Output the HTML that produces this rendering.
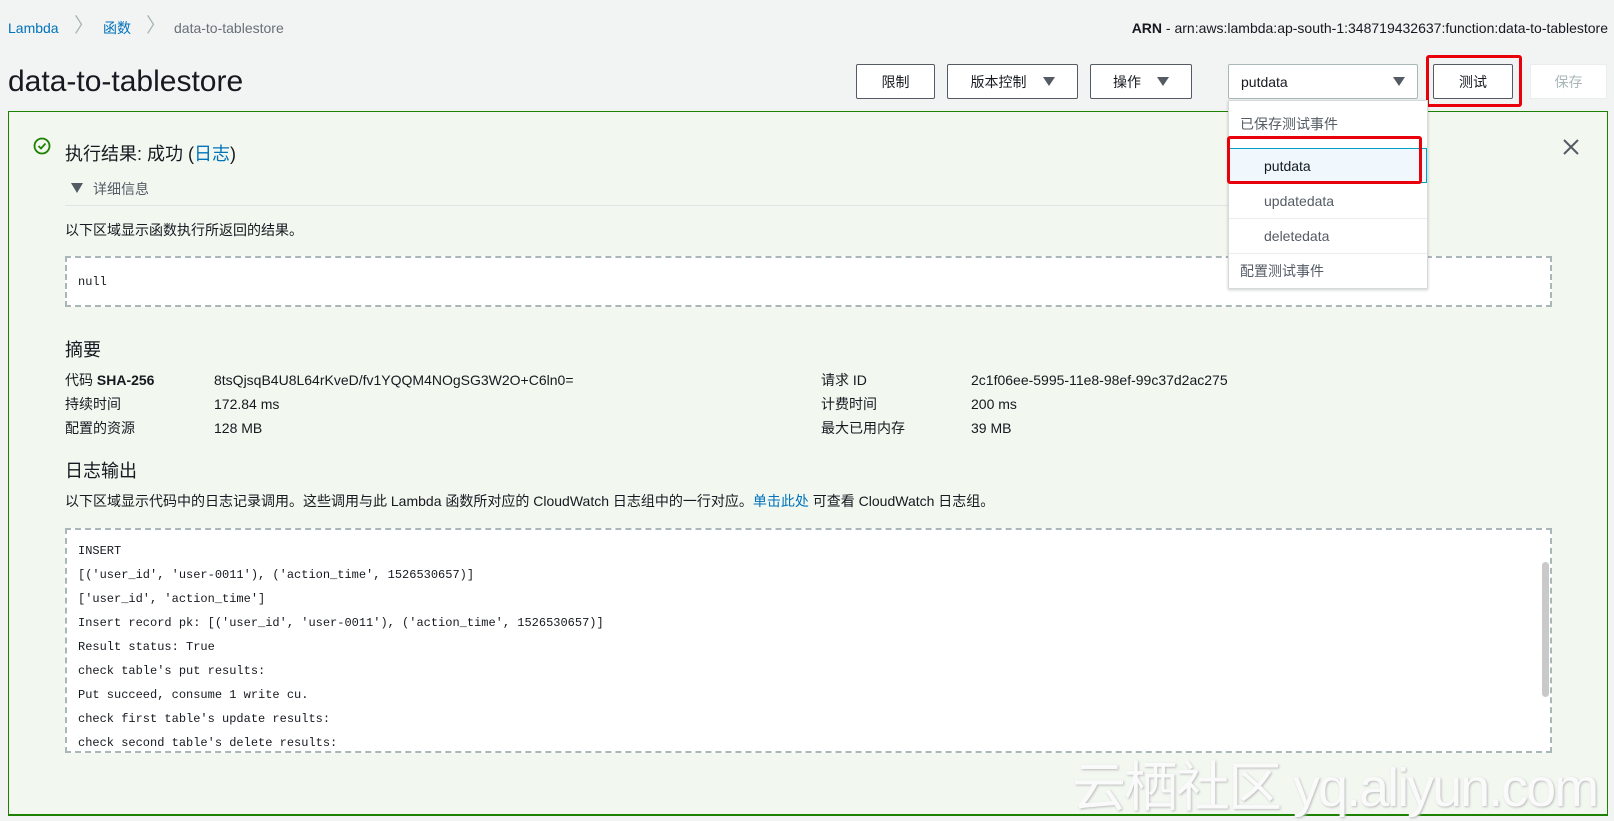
<!DOCTYPE html>
<html><head><meta charset="utf-8"><style>
*{box-sizing:border-box;margin:0;padding:0}
body{width:1614px;height:821px;overflow:hidden;background:#f2f3f3;font-family:"Liberation Sans","Noto Sans CJK SC",sans-serif;font-size:14px;color:#16191f;position:relative}
.a{position:absolute;white-space:nowrap;line-height:18px}
.btn{position:absolute;border:1px solid #545b64;background:#fff;border-radius:2px;font-size:14px;color:#16191f;display:flex;align-items:center;justify-content:center;height:35px;top:64px}
.tri{display:inline-block;width:0;height:0;border-left:6px solid transparent;border-right:6px solid transparent;border-top:9px solid #545b64;margin-left:16px}
.mono{font-family:"Liberation Mono",monospace;font-size:12px;letter-spacing:0}
.red{position:absolute;border:3px solid #e8000b;border-radius:3px}
</style></head><body>
<div class="a" style="left:8px;top:19px;color:#0073bb">Lambda</div>
<div class="a" style="left:74px;top:17px;color:#aab7b8;font-size:20px">〉</div>
<div class="a" style="left:103px;top:19px;color:#0073bb">函数</div>
<div class="a" style="left:146px;top:17px;color:#aab7b8;font-size:20px">〉</div>
<div class="a" style="left:174px;top:19px;color:#687078">data-to-tablestore</div>
<div class="a" style="right:6px;top:19px"><b>ARN</b> - arn:aws:lambda:ap-south-1:348719432637:function:data-to-tablestore</div>
<div class="a" style="left:8px;top:66px;font-size:30px;line-height:32px">data-to-tablestore</div>

<div class="btn" style="left:856px;width:79px">限制</div>
<div class="btn" style="left:947px;width:131px">版本控制<span class="tri"></span></div>
<div class="btn" style="left:1090px;width:102px">操作<span class="tri"></span></div>
<div class="btn" style="left:1228px;width:190px;justify-content:space-between;padding:0 12px;border-color:#aab7b8">putdata<span class="tri"></span></div>
<div class="btn" style="left:1433px;width:80px">测试</div>
<div class="btn" style="left:1530px;width:77px;border-color:#eaeded;color:#aab7b8">保存</div>
<div class="red" style="left:1426px;top:55px;width:96px;height:52px"></div>

<div class="a" style="left:8px;top:111px;width:1600px;height:705px;border:1px solid #1d8102;border-bottom:2px solid #1d8102;background:#f2f7f0"></div>
<svg class="a" style="left:33px;top:137px" width="18" height="18"><circle cx="9" cy="9" r="7.5" fill="none" stroke="#1d8102" stroke-width="1.8"/><path d="M5.5 9l2.5 2.5 4.5-5" fill="none" stroke="#1d8102" stroke-width="1.8"/></svg>
<div class="a" style="left:65px;top:143px;font-size:18px;line-height:22px">执行结果: 成功 (<span style="color:#0073bb">日志</span>)</div>
<svg class="a" style="left:1562px;top:138px" width="18" height="18"><path d="M2 2L16 16M16 2L2 16" stroke="#545b64" stroke-width="2"/></svg>
<svg class="a" style="left:71px;top:183px" width="12" height="10"><path d="M0 0H12L6 10Z" fill="#545b64"/></svg>
<div class="a" style="left:93px;top:180px;color:#545b64">详细信息</div>
<div class="a" style="left:65px;top:205px;width:1176px;height:1px;background:#e1e4e4"></div>
<div class="a" style="left:65px;top:221px">以下区域显示函数执行所返回的结果。</div>
<div class="a" style="left:65px;top:256px;width:1487px;height:51px;border:2px dashed #aab7b8;background:#fff"></div>
<div class="a mono" style="left:78px;top:273px">null</div>

<div class="a" style="left:65px;top:339px;font-size:18px;line-height:22px">摘要</div>
<div class="a" style="left:65px;top:371px">代码 <b>SHA-256</b></div>
<div class="a" style="left:214px;top:371px">8tsQjsqB4U8L64rKveD/fv1YQQM4NOgSG3W2O+C6ln0=</div>
<div class="a" style="left:65px;top:395px">持续时间</div>
<div class="a" style="left:214px;top:395px">172.84 ms</div>
<div class="a" style="left:65px;top:419px">配置的资源</div>
<div class="a" style="left:214px;top:419px">128 MB</div>
<div class="a" style="left:821px;top:371px">请求 ID</div>
<div class="a" style="left:971px;top:371px">2c1f06ee-5995-11e8-98ef-99c37d2ac275</div>
<div class="a" style="left:821px;top:395px">计费时间</div>
<div class="a" style="left:971px;top:395px">200 ms</div>
<div class="a" style="left:821px;top:419px">最大已用内存</div>
<div class="a" style="left:971px;top:419px">39 MB</div>

<div class="a" style="left:65px;top:460px;font-size:18px;line-height:22px">日志输出</div>
<div class="a" style="left:65px;top:492px">以下区域显示代码中的日志记录调用。这些调用与此 Lambda 函数所对应的 CloudWatch 日志组中的一行对应。<span style="color:#0073bb">单击此处</span> 可查看 CloudWatch 日志组。</div>
<div class="a" style="left:65px;top:528px;width:1487px;height:225px;border:2px dashed #aab7b8;background:#fff;overflow:hidden">
<div class="mono" style="position:absolute;left:11px;top:-15px;line-height:24px;color:#16191f">
<div style="color:#687078">e62c1da936c957ea562c63ec9952.</div>
<div>INSERT</div>
<div>[('user_id', 'user-0011'), ('action_time', 1526530657)]</div>
<div>['user_id', 'action_time']</div>
<div>Insert record pk: [('user_id', 'user-0011'), ('action_time', 1526530657)]</div>
<div>Result status: True</div>
<div>check table's put results:</div>
<div>Put succeed, consume 1 write cu.</div>
<div>check first table's update results:</div>
<div>check second table's delete results:</div>
</div>
<div style="position:absolute;left:1475px;top:32px;width:7px;height:135px;background:#c9c9c9;border-radius:4px"></div>
</div>
<div class="a" style="left:1072px;top:758px;font-size:54px;line-height:60px;color:#fafafa;text-shadow:1px 1px 2px #bbb;letter-spacing:-2px">云栖社区 yq.aliyun.com</div>

<div class="a" style="left:1228px;top:100px;width:200px;height:189px;background:#fff;border:1px solid #d5dbdb;box-shadow:0 1px 3px rgba(0,0,0,.2)"></div>
<div class="a" style="left:1240px;top:115px;color:#545b64">已保存测试事件</div>
<div class="a" style="left:1229px;top:148px;width:198px;height:35px;background:#f1f8fd;border:1px solid #00a1c9"></div>
<div class="a" style="left:1264px;top:157px">putdata</div>
<div class="a" style="left:1264px;top:192px;color:#545b64">updatedata</div>
<div class="a" style="left:1229px;top:218px;width:198px;height:1px;background:#eaeded"></div>
<div class="a" style="left:1264px;top:227px;color:#545b64">deletedata</div>
<div class="a" style="left:1229px;top:253px;width:198px;height:1px;background:#eaeded"></div>
<div class="a" style="left:1240px;top:262px;color:#545b64">配置测试事件</div>
<div class="red" style="left:1227px;top:136px;width:195px;height:48px"></div>
</body></html>
